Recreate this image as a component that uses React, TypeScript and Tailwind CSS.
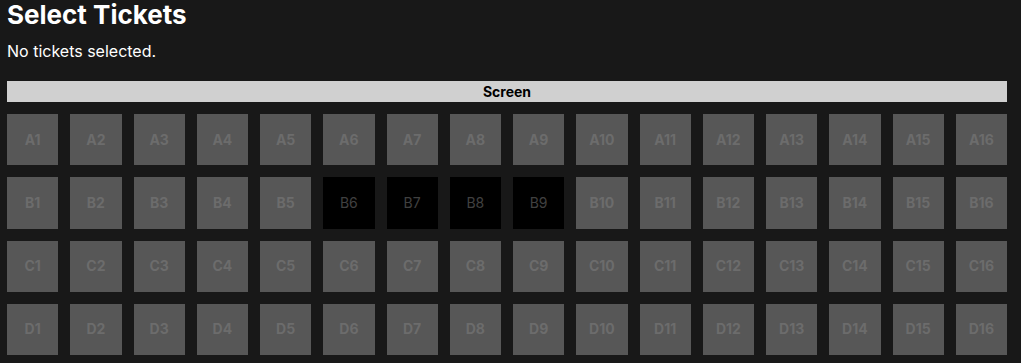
import React from 'react';

const rows = ['A', 'B', 'C', 'D'];
const cols = Array.from({ length: 16 }, (_, i) => i + 1);
const taken = ['B6', 'B7', 'B8', 'B9'];

function Seat({ id }: { id: string }) {
  const isTaken = taken.includes(id);
  return (
    <div
      className={
        isTaken
          ? 'aspect-square flex items-center justify-center bg-black text-[#404040] text-sm font-normal'
          : 'aspect-square flex items-center justify-center bg-[#575757] text-[#6c6c6c] text-sm font-bold'
      }
    >
      {id}
    </div>
  );
}

export default function App() {
  return (
    <div className="min-h-screen bg-[#181818] text-white px-[7px] font-['Inter',sans-serif]">
      <div className="w-[1000px]">
        <h1 className="text-[26px] font-bold leading-[30px]">Select Tickets</h1>
        <p className="mt-[9px] text-base leading-6">No tickets selected.</p>

        {/* Screen */}
        <div className="mt-[18px] h-[21px] bg-[#d0d0d0] text-black text-[14px] font-bold flex items-center justify-center">
          Screen
        </div>

        {/* Seats */}
        <div className="mt-3 grid grid-cols-16 gap-3">
          {rows.map((r) => cols.map((c) => <Seat key={r + c} id={r + c} />))}
        </div>
      </div>
    </div>
  );
}
